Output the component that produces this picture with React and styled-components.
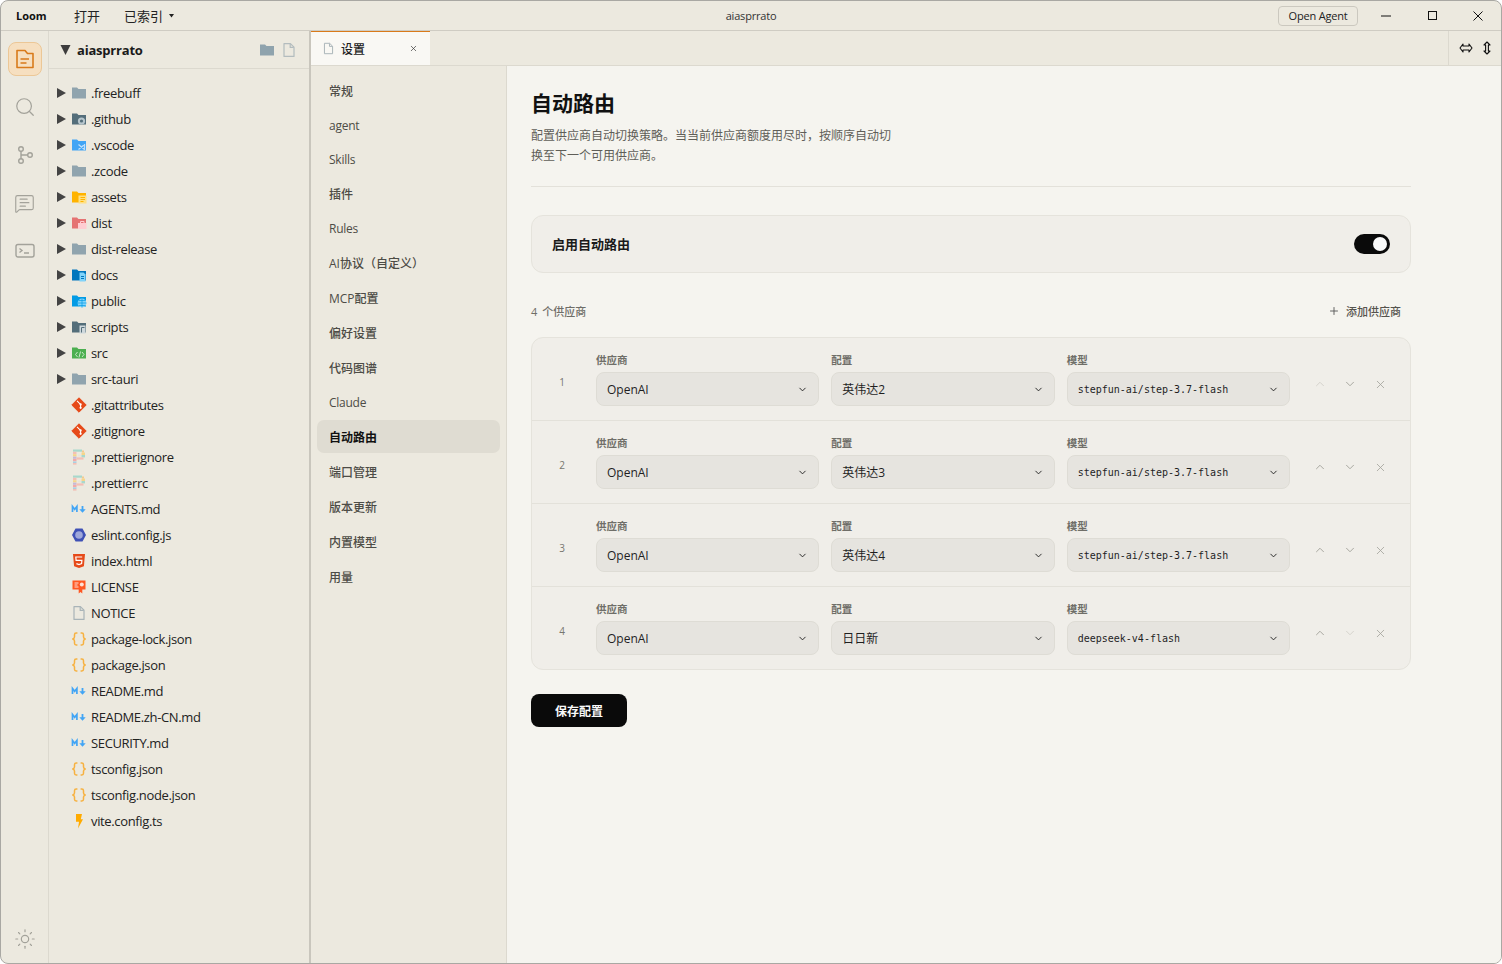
import React from "react";
import styled, { createGlobalStyle } from "styled-components";
import { ChevronDown, ChevronUp, X, Plus, Search, Sun, MessageSquareText } from "lucide-react";

const sans = `"Open Sans", "Noto Sans CJK SC", sans-serif`;

const files = [
    { name: ".freebuff", icon: "folder", dir: true },
    { name: ".github", icon: "github", dir: true },
    { name: ".vscode", icon: "vscode", dir: true },
    { name: ".zcode", icon: "folder", dir: true },
    { name: "assets", icon: "assets", dir: true },
    { name: "dist", icon: "dist", dir: true },
    { name: "dist-release", icon: "folder", dir: true },
    { name: "docs", icon: "docs", dir: true },
    { name: "public", icon: "public", dir: true },
    { name: "scripts", icon: "scripts", dir: true },
    { name: "src", icon: "src", dir: true },
    { name: "src-tauri", icon: "folder", dir: true },
    { name: ".gitattributes", icon: "git" },
    { name: ".gitignore", icon: "git" },
    { name: ".prettierignore", icon: "prettier" },
    { name: ".prettierrc", icon: "prettier" },
    { name: "AGENTS.md", icon: "md" },
    { name: "eslint.config.js", icon: "eslint" },
    { name: "index.html", icon: "html" },
    { name: "LICENSE", icon: "license" },
    { name: "NOTICE", icon: "file" },
    { name: "package-lock.json", icon: "json" },
    { name: "package.json", icon: "json" },
    { name: "README.md", icon: "md" },
    { name: "README.zh-CN.md", icon: "md" },
    { name: "SECURITY.md", icon: "md" },
    { name: "tsconfig.json", icon: "json" },
    { name: "tsconfig.node.json", icon: "json" },
    { name: "vite.config.ts", icon: "vite" },
];

const navItems = [
    { label: "常规" },
    { label: "agent", latin: true },
    { label: "Skills", latin: true },
    { label: "插件" },
    { label: "Rules", latin: true },
    { label: "AI协议（自定义）" },
    { label: "MCP配置" },
    { label: "偏好设置" },
    { label: "代码图谱" },
    { label: "Claude", latin: true },
    { label: "自动路由", active: true },
    { label: "端口管理" },
    { label: "版本更新" },
    { label: "内置模型" },
    { label: "用量" },
];

const routes = [
    { config: "英伟达2", model: "stepfun-ai/step-3.7-flash", first: true },
    { config: "英伟达3", model: "stepfun-ai/step-3.7-flash" },
    { config: "英伟达4", model: "stepfun-ai/step-3.7-flash" },
    { config: "日日新", model: "deepseek-v4-flash", last: true },
];

const folderPath = "M1 2.5h5L7.5 4H15v9.5H1z";

function FileIcon({ kind }) {
    const folder = color => <path d={folderPath} fill={color} />;
    switch (kind) {
        case "folder":
            return <svg width="16" height="16" viewBox="0 0 16 16">{folder("#90a4ae")}</svg>;
        case "github":
            return (
                <svg width="16" height="16" viewBox="0 0 16 16">
                    {folder("#546e7a")}
                    <circle cx="10.5" cy="10" r="3.6" fill="#b7c6cd" />
                    <circle cx="10.5" cy="10" r="1.6" fill="#546e7a" />
                </svg>
            );
        case "vscode":
            return (
                <svg width="16" height="16" viewBox="0 0 16 16">
                    {folder("#42a5f5")}
                    <path d="M7.5 7.5l6 5M13.5 7v6M7.5 12.5l6-5" stroke="#bbdefb" strokeWidth="1.3" fill="none" />
                </svg>
            );
        case "assets":
            return (
                <svg width="16" height="16" viewBox="0 0 16 16">
                    {folder("#ffb300")}
                    <path d="M7.5 6.5h8v8h-8z" fill="#ffe082" />
                    <path d="M9.5 8.5h4.5M9.5 10.5h4.5M9.5 12.5h3" stroke="#ffb300" strokeWidth="1" />
                </svg>
            );
        case "dist":
            return (
                <svg width="16" height="16" viewBox="0 0 16 16">
                    {folder("#e57373")}
                    <path d="M7 8h8.5v6H7z" fill="#ffcdd2" />
                    <path d="M9.5 8V6.5h3.5V8" stroke="#ffcdd2" strokeWidth="1" fill="none" />
                </svg>
            );
        case "docs":
            return (
                <svg width="16" height="16" viewBox="0 0 16 16">
                    {folder("#0277bd")}
                    <path d="M8.5 5.5h4l2 2v7h-6z" fill="#81d4fa" />
                    <path d="M10 9.5h3M10 11.5h3" stroke="#0277bd" strokeWidth="1" />
                </svg>
            );
        case "public":
            return (
                <svg width="16" height="16" viewBox="0 0 16 16">
                    {folder("#039be5")}
                    <circle cx="11" cy="10" r="4.4" fill="#81d4fa" />
                    <path d="M6.6 10h8.8M11 5.6v8.8M8 7.5h6M8 12.5h6" stroke="#039be5" strokeWidth=".7" fill="none" />
                </svg>
            );
        case "scripts":
            return (
                <svg width="16" height="16" viewBox="0 0 16 16">
                    {folder("#546e7a")}
                    <path d="M8.5 6.5h6v8h-6z" fill="#cfd8dc" />
                    <path d="M10.5 8.5h3M10.5 8.5v5" stroke="#546e7a" strokeWidth="1" fill="none" />
                </svg>
            );
        case "src":
            return (
                <svg width="16" height="16" viewBox="0 0 16 16">
                    {folder("#4caf50")}
                    <path d="M6.5 7L4.5 9.5 6.5 12M11 7l2 2.5-2 2.5M9.5 6.5L8 12.5" stroke="#c8e6c9" strokeWidth="1" fill="none" />
                </svg>
            );
        case "git":
            return (
                <svg width="16" height="16" viewBox="0 0 16 16">
                    <path d="M8 .8L15.2 8 8 15.2.8 8z" fill="#e64a19" stroke="#e64a19" strokeLinejoin="round" />
                    <path d="M6 3.8l3.6 3.6v3.4M9.6 7.4" stroke="#fff" strokeWidth="1.1" fill="none" />
                    <circle cx="9.6" cy="7.4" r="1.1" fill="#fff" />
                    <circle cx="9.6" cy="10.8" r="1.1" fill="#fff" />
                </svg>
            );
        case "prettier":
            return (
                <svg width="16" height="16" viewBox="0 0 16 16">
                    <path d="M2 .5h9v2.2H2z" fill="#a8d8cc" />
                    <path d="M11 1.5h2v2h-2z" fill="#f3c98f" />
                    <path d="M2 2.8h3.5V5H2z" fill="#f4bfb4" />
                    <path d="M10.5 3.5H14v2.5h-3.5z" fill="#f6d58a" />
                    <path d="M2 5.2h3.5v2.2H2z" fill="#f6d58a" />
                    <path d="M7 5.5h3v2H7z" fill="#e8e5da" />
                    <path d="M10.5 6H14v2.4h-3.5z" fill="#a8d8cc" />
                    <path d="M2 7.6h3.5v2.2H2z" fill="#c7b8d6" />
                    <path d="M5.5 8.4h7v2.2h-7z" fill="#f4bfb4" />
                    <path d="M2 10h3.5v2.2H2z" fill="#f2a9a9" />
                    <path d="M2 12.4h3.5v1.6H2z" fill="#a9cfe2" />
                    <path d="M2 14h3.5v1.6H2z" fill="#f4bfb4" />
                </svg>
            );
        case "md":
            return (
                <svg width="16" height="16" viewBox="0 0 16 16">
                    <path d="M1.5 11V5.5l2.2 2.8 2.2-2.8V11" stroke="#42a5f5" strokeWidth="1.7" fill="none" />
                    <path d="M11.5 5v4.5" stroke="#42a5f5" strokeWidth="1.8" />
                    <path d="M8.3 8.2h6.4L11.5 11.8z" fill="#42a5f5" />
                </svg>
            );
        case "eslint":
            return (
                <svg width="16" height="16" viewBox="0 0 16 16">
                    <path d="M4.5 1.5h7L15 8l-3.5 6.5h-7L1 8z" fill="#3f51b5" />
                    <circle cx="8" cy="8" r="3.8" fill="#9fa8da" />
                </svg>
            );
        case "html":
            return (
                <svg width="16" height="16" viewBox="0 0 16 16">
                    <path d="M2 1h12l-1.1 12.2L8 15l-4.9-1.8z" fill="#e64a19" />
                    <path d="M11.2 4H4.8l.3 3.4h5.8l-.3 3.2L8 11.6l-2.6-1" stroke="#fff" strokeWidth="1.2" fill="none" />
                </svg>
            );
        case "license":
            return (
                <svg width="16" height="16" viewBox="0 0 16 16">
                    <path d="M1.5 1.5h13v9h-3.2v4L9.5 13l-1.8 1.5v-4h-6.2z" fill="#ff5722" />
                    <path d="M3.5 4h4M3.5 6h3M3.5 8h4" stroke="#ffe0d6" strokeWidth="1" />
                    <circle cx="10.8" cy="5.5" r="2" fill="#ffe0d6" />
                </svg>
            );
        case "file":
            return <PlainFile size={16} color="#a9b4b8" />;
        case "json":
            return (
                <svg width="16" height="16" viewBox="0 0 16 16" fill="none" stroke="#f9a825" strokeWidth="1.5" opacity=".85">
                    <path d="M6.4 2H5.2C4 2 3.5 2.6 3.5 3.7v2.2C3.5 7 2.9 7.7 1.4 8c1.5.3 2.1 1 2.1 2.1v2.2c0 1.1.5 1.7 1.7 1.7h1.2" />
                    <path d="M9.6 2h1.2c1.2 0 1.7.6 1.7 1.7v2.2c0 1.1.6 1.8 2.1 2.1-1.5.3-2.1 1-2.1 2.1v2.2c0 1.1-.5 1.7-1.7 1.7H9.6" />
                </svg>
            );
        case "vite":
            return (
                <svg width="16" height="16" viewBox="0 0 16 16">
                    <path d="M5 1h6L9.8 6.2H12L7 15.5 8 8.8H5z" fill="#ffab00" />
                </svg>
            );
        default:
            return null;
    }
}

function PlainFile({ size, color }) {
    return (
        <svg width={size} height={size} viewBox="0 0 16 16" fill="none" stroke={color} strokeWidth="1.2">
            <path d="M3 1.6h6.4L13 5.2v9.2H3z" strokeLinejoin="round" />
            <path d="M9.2 1.8v3.6h3.6" />
        </svg>
    );
}

export default function App() {
    return (
        <>
            <GlobalStyle />
            <Frame>
                <TitleBar>
                    <MenuGroup>
                        <Brand>Loom</Brand>
                        <MenuItem $width="50px">打开</MenuItem>
                        <MenuItem>
                            已索引
                            <svg width="5" height="4" viewBox="0 0 5 4"><path d="M0 0h5L2.5 3.4z" fill="#222" /></svg>
                        </MenuItem>
                    </MenuGroup>
                    <WindowTitle>aiasprrato</WindowTitle>
                    <WindowRight>
                        <OpenAgent>Open Agent</OpenAgent>
                        <WindowButton>
                            <svg width="12" height="12" viewBox="0 0 12 12"><path d="M1 6h10" stroke="#111" strokeWidth="1" /></svg>
                        </WindowButton>
                        <WindowButton>
                            <svg width="12" height="12" viewBox="0 0 12 12"><rect x="2.5" y="1.5" width="8" height="8" fill="none" stroke="#111" strokeWidth="1" /></svg>
                        </WindowButton>
                        <WindowButton>
                            <svg width="12" height="12" viewBox="0 0 12 12"><path d="M1.5 1.5l9 9M10.5 1.5l-9 9" stroke="#111" strokeWidth="1" /></svg>
                        </WindowButton>
                    </WindowRight>
                </TitleBar>

                <Body>
                    <ActivityBar>
                        <ActivityTop>
                            <ActivityButton $active>
                                <svg width="20" height="20" viewBox="0 0 20 20" fill="none" stroke="#d97a1a" strokeWidth="1.6" strokeLinejoin="round">
                                    <path d="M2 1.5h8L12.5 4.5H18V18.5H2z" />
                                    <path d="M5.5 10h8.5M5.5 14h6" />
                                </svg>
                            </ActivityButton>
                            <ActivityButton><Search size={22} strokeWidth={1.3} /></ActivityButton>
                            <ActivityButton>
                                <svg width="20" height="20" viewBox="0 0 20 20" fill="none" stroke="currentColor" strokeWidth="1.4">
                                    <circle cx="6" cy="4" r="2.3" />
                                    <circle cx="6" cy="16" r="2.3" />
                                    <circle cx="15" cy="10" r="2.3" />
                                    <path d="M6 6.3v7.4M6 10h6.7" />
                                </svg>
                            </ActivityButton>
                            <ActivityButton><MessageSquareText size={21} strokeWidth={1.3} /></ActivityButton>
                            <ActivityButton>
                                <svg width="20" height="20" viewBox="0 0 20 20" fill="none" stroke="currentColor" strokeWidth="1.4">
                                    <rect x="1" y="3.5" width="18" height="12.5" rx="2" />
                                    <path d="M4.5 7.5l2.5 2-2.5 2M9 12h5" />
                                </svg>
                            </ActivityButton>
                        </ActivityTop>
                        <ActivityButton><Sun size={22} strokeWidth={1.3} /></ActivityButton>
                    </ActivityBar>

                    <Explorer>
                        <ExplorerHeader>
                            <svg width="11" height="10" viewBox="0 0 11 10"><path d="M.5 0h10L5.5 10z" fill="#3d3d3d" /></svg>
                            <ProjectName>aiasprrato</ProjectName>
                            <HeaderActions>
                                <svg width="16" height="16" viewBox="0 0 16 16"><path d="M1 2.5h5L7.5 4H15v9.5H1z" fill="#8fa3ad" /></svg>
                                <PlainFile size={16} color="#b3bcbe" />
                            </HeaderActions>
                        </ExplorerHeader>
                        <Tree>
                            {files.map(file => (
                                <TreeRow key={file.name}>
                                    <Caret>
                                        {file.dir && <svg width="9" height="10" viewBox="0 0 9 10"><path d="M0 0l9 5-9 5z" fill="#444" /></svg>}
                                    </Caret>
                                    <IconSlot><FileIcon kind={file.icon} /></IconSlot>
                                    <FileName>{file.name}</FileName>
                                </TreeRow>
                            ))}
                        </Tree>
                    </Explorer>

                    <Workspace>
                        <TabBar>
                            <Tab>
                                <PlainFile size={13} color="#a9b4b8" />
                                <TabLabel>设置</TabLabel>
                                <X size={9} color="#333" strokeWidth={1.8} />
                            </Tab>
                            <TabActions>
                                <svg width="14" height="10" viewBox="0 0 14 10" fill="none" stroke="#111" strokeWidth="1.1">
                                    <path d="M4 1L1 5l3 4V7h6v2l3-4-3-4v2H4z" strokeLinejoin="round" />
                                </svg>
                                <svg width="8" height="14" viewBox="0 0 8 14" fill="none" stroke="#111" strokeWidth="1.1">
                                    <path d="M1 4l3-3 3 3H5.4v6H7l-3 3-3-3h1.6V4z" strokeLinejoin="round" />
                                </svg>
                            </TabActions>
                        </TabBar>
                        <Settings>
                            <SettingsNav>
                                {navItems.map(item => (
                                    <NavItem key={item.label} $active={item.active} $latin={item.latin}>
                                        {item.label}
                                    </NavItem>
                                ))}
                            </SettingsNav>
                            <Main>
                                <Title>自动路由</Title>
                                <Description>配置供应商自动切换策略。当当前供应商额度用尽时，按顺序自动切换至下一个可用供应商。</Description>
                                <Rule />
                                <ToggleCard>
                                    <ToggleLabel>启用自动路由</ToggleLabel>
                                    <Toggle><Knob /></Toggle>
                                </ToggleCard>
                                <ListHeader>
                                    <Count>4 个供应商</Count>
                                    <AddButton>
                                        <Plus size={12} strokeWidth={1.8} color="#555" />
                                        添加供应商
                                    </AddButton>
                                </ListHeader>
                                <RouteTable>
                                    {routes.map((route, index) => (
                                        <RouteRow key={index}>
                                            <RouteIndex>{index + 1}</RouteIndex>
                                            <RouteFields>
                                                <Field>
                                                    <FieldLabel>供应商</FieldLabel>
                                                    <Select>OpenAI<ChevronDown size={11} strokeWidth={2} /></Select>
                                                </Field>
                                                <Field>
                                                    <FieldLabel>配置</FieldLabel>
                                                    <Select>{route.config}<ChevronDown size={11} strokeWidth={2} /></Select>
                                                </Field>
                                                <Field>
                                                    <FieldLabel>模型</FieldLabel>
                                                    <Select $mono>{route.model}<ChevronDown size={11} strokeWidth={2} /></Select>
                                                </Field>
                                            </RouteFields>
                                            <RouteActions>
                                                <RowAction $disabled={route.first}><ChevronUp size={14} strokeWidth={1.6} /></RowAction>
                                                <RowAction $disabled={route.last}><ChevronDown size={14} strokeWidth={1.6} /></RowAction>
                                                <RowAction><X size={13} strokeWidth={1.5} /></RowAction>
                                            </RouteActions>
                                        </RouteRow>
                                    ))}
                                </RouteTable>
                                <SaveButton>保存配置</SaveButton>
                            </Main>
                        </Settings>
                    </Workspace>
                </Body>
            </Frame>
        </>
    );
}

const GlobalStyle = createGlobalStyle`
    html, body {
        margin: 0;
        height: 100%;
        background: #fff;
        overflow: hidden;
    }
    #root {
        height: 100%;
    }
    * {
        box-sizing: border-box;
    }
`;

const Frame = styled.div`
    display: flex;
    flex-direction: column;
    height: 964px;
    background: #ece9df;
    border: 1px solid #a9a8a3;
    border-radius: 8px;
    overflow: hidden;
    font-family: ${sans};
    color: #1f1f1f;
`;

const TitleBar = styled.div`
    position: relative;
    display: flex;
    align-items: center;
    justify-content: space-between;
    flex: none;
    height: 30px;
    padding-left: 15px;
    border-bottom: 1px solid #cfccc3;
`;

const MenuGroup = styled.div`
    display: flex;
    align-items: center;
`;

const Brand = styled.span`
    width: 58px;
    font-size: 11px;
    font-weight: 700;
    color: #111;
`;

const MenuItem = styled.span`
    display: inline-flex;
    align-items: center;
    gap: 6px;
    width: ${props => props.$width || "auto"};
    font-size: 13px;
    color: #222;
`;

const WindowTitle = styled.span`
    position: absolute;
    left: 0;
    right: 0;
    text-align: center;
    font-size: 11px;
    letter-spacing: -0.2px;
    color: #333;
    pointer-events: none;
`;

const WindowRight = styled.div`
    display: flex;
    align-items: center;
    height: 100%;
`;

const OpenAgent = styled.button`
    width: 80px;
    height: 20px;
    margin-right: 5px;
    padding: 0;
    background: transparent;
    border: 1px solid #cbc8bf;
    border-radius: 4px;
    font: 11px ${sans};
    letter-spacing: -0.2px;
    color: #222;
`;

const WindowButton = styled.div`
    display: flex;
    align-items: center;
    justify-content: center;
    width: 46px;
    height: 100%;
`;

const Body = styled.div`
    display: flex;
    flex: 1;
    min-height: 0;
`;

const ActivityBar = styled.div`
    display: flex;
    flex-direction: column;
    justify-content: space-between;
    align-items: center;
    flex: none;
    width: 48px;
    padding: 11px 0 7px;
    border-right: 1px solid #dcd9cf;
`;

const ActivityTop = styled.div`
    display: flex;
    flex-direction: column;
    gap: 14px;
`;

const ActivityButton = styled.div`
    display: flex;
    align-items: center;
    justify-content: center;
    width: 34px;
    height: 34px;
    border-radius: 8px;
    color: #a3a29a;
    background: ${props => (props.$active ? "#f6dfc0" : "transparent")};
    border: 1px solid ${props => (props.$active ? "#ecc796" : "transparent")};
`;

const Explorer = styled.div`
    display: flex;
    flex-direction: column;
    flex: none;
    width: 262px;
    border-right: 2px solid #c9c6bd;
`;

const ExplorerHeader = styled.div`
    display: flex;
    align-items: center;
    flex: none;
    height: 38px;
    padding: 0 12px 0 11px;
    border-bottom: 1px solid #dcd9cf;
`;

const ProjectName = styled.span`
    margin-left: 6px;
    font-size: 13px;
    font-weight: 700;
    letter-spacing: -0.2px;
    color: #1a1a1a;
`;

const HeaderActions = styled.div`
    display: flex;
    align-items: center;
    gap: 6px;
    margin-left: auto;
`;

const Tree = styled.div`
    display: flex;
    flex-direction: column;
    padding-top: 11px;
`;

const TreeRow = styled.div`
    display: flex;
    align-items: center;
    height: 26px;
    padding-left: 8px;
`;

const Caret = styled.span`
    display: flex;
    align-items: center;
    flex: none;
    width: 14px;
`;

const IconSlot = styled.span`
    display: flex;
    flex: none;
    width: 20px;
`;

const FileName = styled.span`
    font-size: 13px;
    letter-spacing: -0.35px;
    color: #222;
`;

const Workspace = styled.div`
    display: flex;
    flex-direction: column;
    flex: 1;
    min-width: 0;
`;

const TabBar = styled.div`
    display: flex;
    justify-content: space-between;
    flex: none;
    height: 35px;
    border-bottom: 1px solid #dcd9cf;
`;

const Tab = styled.div`
    display: flex;
    align-items: center;
    width: 119px;
    height: 34px;
    padding: 0 12px 0 11px;
    background: #f9f8f4;
    border-top: 1px solid #d97a1a;
    svg:last-child {
        margin-left: auto;
    }
`;

const TabLabel = styled.span`
    margin-left: 6px;
    font-size: 12px;
    font-weight: 500;
    color: #222;
`;

const TabActions = styled.div`
    display: flex;
    align-items: center;
    gap: 10px;
    width: 53px;
    padding-left: 10px;
    border-left: 1px solid #dcd9cf;
`;

const Settings = styled.div`
    display: flex;
    flex: 1;
    min-height: 0;
`;

const SettingsNav = styled.div`
    display: flex;
    flex-direction: column;
    gap: 2px;
    flex: none;
    width: 196px;
    padding: 8px 6px;
    border-right: 1px solid #dcd9cf;
`;

const NavItem = styled.div`
    display: flex;
    align-items: center;
    height: ${props => (props.$latin ? "32px" : "33px")};
    padding: 0 12px;
    border-radius: 7px;
    font-size: 12px;
    font-weight: ${props => (props.$active ? 700 : 500)};
    letter-spacing: ${props => (props.$latin ? "-0.25px" : "0")};
    color: ${props => (props.$active ? "#111" : "#4d4c46")};
    background: ${props => (props.$active ? "#dfdcd2" : "transparent")};
`;

const Main = styled.div`
    flex: 1;
    min-width: 0;
    padding: 23px 90px 0 24px;
    background: #f5f4ef;
`;

const Title = styled.h1`
    margin: 0;
    font-size: 21px;
    line-height: 28px;
    font-weight: 600;
    color: #111;
`;

const Description = styled.p`
    width: 364px;
    margin: 9px 0 0;
    font-size: 12px;
    line-height: 20px;
    color: #5f5e58;
`;

const Rule = styled.div`
    height: 1px;
    margin-top: 20px;
    background: #e3e1da;
`;

const ToggleCard = styled.div`
    display: flex;
    align-items: center;
    justify-content: space-between;
    height: 58px;
    margin-top: 28px;
    padding: 0 20px;
    background: #f0eee9;
    border: 1px solid #e5e3dc;
    border-radius: 12px;
`;

const ToggleLabel = styled.span`
    margin-top: -2px;
    font-size: 13px;
    font-weight: 600;
    color: #1a1a1a;
`;

const Toggle = styled.div`
    display: flex;
    align-items: center;
    justify-content: flex-end;
    width: 36px;
    height: 20px;
    padding: 0 3px;
    background: #0a0a0a;
    border-radius: 10px;
`;

const Knob = styled.div`
    width: 14px;
    height: 14px;
    background: #fafafa;
    border-radius: 50%;
`;

const ListHeader = styled.div`
    display: flex;
    align-items: center;
    justify-content: space-between;
    height: 20px;
    margin-top: 28px;
    padding-right: 10px;
`;

const Count = styled.span`
    font-size: 11px;
    font-weight: 500;
    word-spacing: 2px;
    color: #6f6e68;
`;

const AddButton = styled.div`
    display: flex;
    align-items: center;
    gap: 6px;
    font-size: 11px;
    font-weight: 500;
    color: #55534d;
`;

const RouteTable = styled.div`
    margin-top: 16px;
    background: #f0eee9;
    border: 1px solid #e5e3dc;
    border-radius: 12px;
    overflow: hidden;
`;

const RouteRow = styled.div`
    display: flex;
    height: 83px;
    padding: 14px 0 0;
    border-bottom: 1px solid #e3e1da;
    &:last-child {
        height: 82px;
        border-bottom: 0;
    }
`;

const RouteIndex = styled.div`
    flex: none;
    width: 64px;
    padding: 22px 4px 0 0;
    text-align: center;
    font-size: 10px;
    line-height: 16px;
    color: #77766f;
`;

const RouteFields = styled.div`
    display: grid;
    grid-template-columns: repeat(3, 1fr);
    gap: 12px;
    flex: 1;
    min-width: 0;
`;

const Field = styled.div`
    display: flex;
    flex-direction: column;
    gap: 4px;
`;

const FieldLabel = styled.span`
    font-size: 10.5px;
    line-height: 16px;
    font-weight: 600;
    color: #6f6e68;
`;

const Select = styled.div`
    display: flex;
    align-items: center;
    justify-content: space-between;
    height: 34px;
    padding: 0 10px;
    background: #e6e4df;
    border: 1px solid #dedcd5;
    border-radius: 8px;
    font-family: ${props => (props.$mono ? `"DejaVu Sans Mono", monospace` : sans)};
    font-size: ${props => (props.$mono ? "10px" : "12px")};
    color: #1f1f1f;
`;

const RouteActions = styled.div`
    display: flex;
    flex: none;
    width: 120px;
    padding: 20px 15px 0;
`;

const RowAction = styled.div`
    display: flex;
    align-items: center;
    justify-content: center;
    width: 30px;
    height: 24px;
    color: ${props => (props.$disabled ? "#d3d1ca" : "#a3a29b")};
`;

const SaveButton = styled.button`
    display: block;
    width: 96px;
    height: 33px;
    margin-top: 24px;
    padding: 0;
    background: #0a0a0a;
    border: 0;
    border-radius: 8px;
    font: 600 12px ${sans};
    color: #fafafa;
`;
